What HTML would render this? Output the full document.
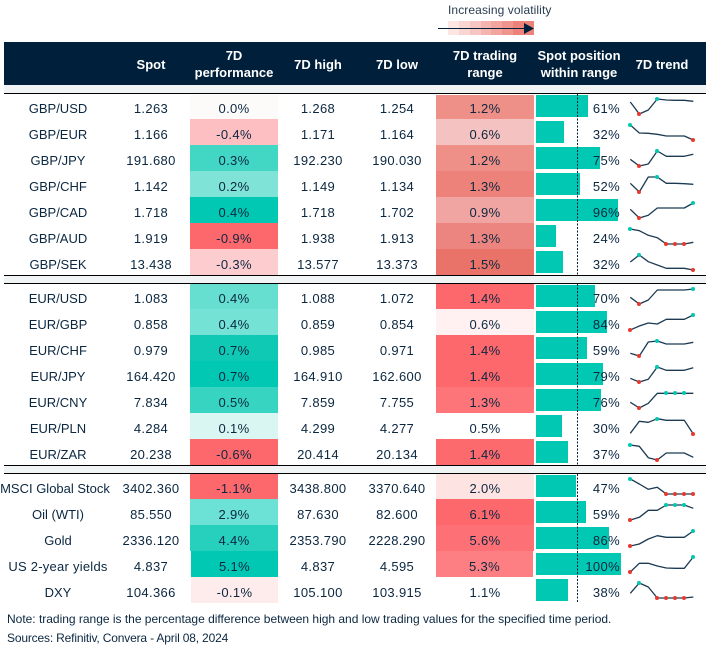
<!DOCTYPE html>
<html><head><meta charset="utf-8"><style>
html,body{margin:0;padding:0;background:#fff}
#w{position:relative;width:706px;height:648px;overflow:hidden;font:13px/32px "Liberation Sans",sans-serif;color:#0b2740}
.a{position:absolute}
.r{position:absolute;left:0;width:706px;height:26px}
.r span{position:absolute;top:0;height:26px;text-align:center;white-space:nowrap}
.r .s,.r .h,.r .o,.r .p,.r .g,.r .c{letter-spacing:.35px}
.l{left:0;width:116px}.s{left:110px;width:82px}.p{left:190px;width:88px}.h{left:278px;width:80px}.o{left:358px;width:78px}.g{left:436px;width:98px}
.r .b{left:536px;top:2px;height:22px;background:#00c8b3}
.r .c{left:580px;width:40px;text-align:right}
.hd{position:absolute;color:#fff;font-weight:bold;font-size:13px;line-height:17px;text-align:center;white-space:nowrap}
.ln{position:absolute;left:4px;width:702px;height:1px;background:#000}
.st{position:absolute;left:4px;width:702px;height:8px;background:#f0f4f4}
.n{position:absolute;left:7px;font-size:12px;line-height:16px;white-space:nowrap}
.sq{position:absolute;top:21px;height:14px;width:11px}
svg{position:absolute;left:0;top:0}
</style></head><body><div id="w">

<div class="a" style="left:448px;top:2px;font-size:12px;line-height:16px;white-space:nowrap;color:#2a3d50;letter-spacing:.1px">Increasing volatility</div>
<div class="sq" style="left:448px;background:#fde6e4"></div>
<div class="sq" style="left:459px;background:#fad6d3"></div>
<div class="sq" style="left:470px;background:#f7c6c2"></div>
<div class="sq" style="left:481px;background:#f4b5b0"></div>
<div class="sq" style="left:491px;background:#f2a59f"></div>
<div class="sq" style="left:502px;background:#ef958e"></div>
<div class="sq" style="left:513px;width:21px;background:#ec8279"></div>

<div class="a" style="left:4px;top:42px;width:702px;height:43px;background:#001f3a"></div>
<div class="hd" style="left:110px;width:82px;top:56px">Spot</div>
<div class="hd" style="left:190px;width:88px;top:47px">7D<br>performance</div>
<div class="hd" style="left:278px;width:80px;top:56px">7D high</div>
<div class="hd" style="left:358px;width:78px;top:56px">7D low</div>
<div class="hd" style="left:436px;width:98px;top:47px">7D trading<br>range</div>
<div class="hd" style="left:530px;width:98px;top:47px">Spot position<br>within range</div>
<div class="hd" style="left:625px;width:74px;top:56px">7D trend</div>
<div class="st" style="top:85px"></div>

<div class="r" style="top:93px"><span class="l">GBP/USD</span><span class="s">1.263</span><span class="p" style="background:#fdfbfa">0.0%</span><span class="h">1.268</span><span class="o">1.254</span><span class="g" style="background:#ee9087">1.2%</span><span class="b" style="width:52px"></span><span class="c">61%</span></div>
<div class="r" style="top:119px"><span class="l">GBP/EUR</span><span class="s">1.166</span><span class="p" style="background:#fdbfc1">-0.4%</span><span class="h">1.171</span><span class="o">1.164</span><span class="g" style="background:#f4c2c0">0.6%</span><span class="b" style="width:28px"></span><span class="c">32%</span></div>
<div class="r" style="top:145px"><span class="l">GBP/JPY</span><span class="s">191.680</span><span class="p" style="background:#42d6c5">0.3%</span><span class="h">192.230</span><span class="o">190.030</span><span class="g" style="background:#ee9087">1.2%</span><span class="b" style="width:64px"></span><span class="c">75%</span></div>
<div class="r" style="top:171px"><span class="l">GBP/CHF</span><span class="s">1.142</span><span class="p" style="background:#7fe3d8">0.2%</span><span class="h">1.149</span><span class="o">1.134</span><span class="g" style="background:#ec8279">1.3%</span><span class="b" style="width:44px"></span><span class="c">52%</span></div>
<div class="r" style="top:197px"><span class="l">GBP/CAD</span><span class="s">1.718</span><span class="p" style="background:#00c8b3">0.4%</span><span class="h">1.718</span><span class="o">1.702</span><span class="g" style="background:#f1a5a2">0.9%</span><span class="b" style="width:82px"></span><span class="c">96%</span></div>
<div class="r" style="top:223px"><span class="l">GBP/AUD</span><span class="s">1.919</span><span class="p" style="background:#fd686d">-0.9%</span><span class="h">1.938</span><span class="o">1.913</span><span class="g" style="background:#ec8580">1.3%</span><span class="b" style="width:20px"></span><span class="c">24%</span></div>
<div class="r" style="top:249px"><span class="l">GBP/SEK</span><span class="s">13.438</span><span class="p" style="background:#fdccce">-0.3%</span><span class="h">13.577</span><span class="o">13.373</span><span class="g" style="background:#e97369">1.5%</span><span class="b" style="width:27px"></span><span class="c">32%</span></div>

<div class="r" style="top:283px"><span class="l">EUR/USD</span><span class="s">1.083</span><span class="p" style="background:#66dfd0">0.4%</span><span class="h">1.088</span><span class="o">1.072</span><span class="g" style="background:#fd686d">1.4%</span><span class="b" style="width:59px"></span><span class="c">70%</span></div>
<div class="r" style="top:309px"><span class="l">EUR/GBP</span><span class="s">0.858</span><span class="p" style="background:#74e3d6">0.4%</span><span class="h">0.859</span><span class="o">0.854</span><span class="g" style="background:#fff1f1">0.6%</span><span class="b" style="width:71px"></span><span class="c">84%</span></div>
<div class="r" style="top:335px"><span class="l">EUR/CHF</span><span class="s">0.979</span><span class="p" style="background:#10c9b5">0.7%</span><span class="h">0.985</span><span class="o">0.971</span><span class="g" style="background:#fd686d">1.4%</span><span class="b" style="width:51px"></span><span class="c">59%</span></div>
<div class="r" style="top:361px"><span class="l">EUR/JPY</span><span class="s">164.420</span><span class="p" style="background:#00c8b3">0.7%</span><span class="h">164.910</span><span class="o">162.600</span><span class="g" style="background:#fd686d">1.4%</span><span class="b" style="width:67px"></span><span class="c">79%</span></div>
<div class="r" style="top:387px"><span class="l">EUR/CNY</span><span class="s">7.834</span><span class="p" style="background:#38d4c2">0.5%</span><span class="h">7.859</span><span class="o">7.755</span><span class="g" style="background:#fd7579">1.3%</span><span class="b" style="width:65px"></span><span class="c">76%</span></div>
<div class="r" style="top:413px"><span class="l">EUR/PLN</span><span class="s">4.284</span><span class="p" style="background:#daf6f2">0.1%</span><span class="h">4.299</span><span class="o">4.277</span><span class="g">0.5%</span><span class="b" style="width:26px"></span><span class="c">30%</span></div>
<div class="r" style="top:439px"><span class="l">EUR/ZAR</span><span class="s">20.238</span><span class="p" style="background:#fd686d">-0.6%</span><span class="h">20.414</span><span class="o">20.134</span><span class="g" style="background:#fd6a6e">1.4%</span><span class="b" style="width:32px"></span><span class="c">37%</span></div>

<div class="r" style="top:473px"><span class="l" style="left:-3px">MSCI Global Stock</span><span class="s">3402.360</span><span class="p" style="background:#fd686d">-1.1%</span><span class="h">3438.800</span><span class="o">3370.640</span><span class="g" style="background:#fee3e3">2.0%</span><span class="b" style="width:40px"></span><span class="c">47%</span></div>
<div class="r" style="top:499px"><span class="l">Oil (WTI)</span><span class="s">85.550</span><span class="p" style="background:#6ce1d5">2.9%</span><span class="h">87.630</span><span class="o">82.600</span><span class="g" style="background:#fd686d">6.1%</span><span class="b" style="width:50px"></span><span class="c">59%</span></div>
<div class="r" style="top:525px"><span class="l">Gold</span><span class="s">2336.120</span><span class="p" style="background:#26d0bd">4.4%</span><span class="h">2353.790</span><span class="o">2228.290</span><span class="g" style="background:#fd7176">5.6%</span><span class="b" style="width:73px"></span><span class="c">86%</span></div>
<div class="r" style="top:551px"><span class="l" style="letter-spacing:.25px">US 2-year yields</span><span class="s">4.837</span><span class="p" style="left:191px;width:87px;background:#00c8b3">5.1%</span><span class="h">4.837</span><span class="o">4.595</span><span class="g" style="width:97px;background:#fd7f83">5.3%</span><span class="b" style="width:85px"></span><span class="c">100%</span></div>
<div class="r" style="top:577px"><span class="l">DXY</span><span class="s">104.366</span><span class="p" style="left:191px;width:87px;background:#feecec">-0.1%</span><span class="h">105.100</span><span class="o">103.915</span><span class="g">1.1%</span><span class="b" style="width:32px"></span><span class="c">38%</span></div>

<div class="a" style="left:4px;top:94px;width:702px;height:1px;background:#fff"></div>
<div class="st" style="top:275px"></div>
<div class="st" style="top:465px"></div>
<div class="ln" style="top:93px"></div>
<div class="ln" style="top:275px"></div>
<div class="ln" style="top:283px"></div>
<div class="ln" style="top:465px"></div>
<div class="ln" style="top:473px"></div>

<svg width="706" height="648" viewBox="0 0 706 648">
<path d="M438 28.5H526" stroke="#001f3a" stroke-width="1" fill="none"/>
<path d="M524 23L534 28.5L524 34Z" fill="#001f3a"/>
<g stroke="#001f3a" stroke-width="1" stroke-dasharray="2 1.5">
<path d="M577.5 94V275M577.5 284V465M577.5 474V603"/>
</g>
<g fill="none" stroke="#1c3a52" stroke-width="1.3" stroke-linejoin="round">
<polyline points="630.3,102 639.3,114 648.3,110 657.3,99 666.3,100 675.3,100.3 684.3,100.3 693.3,101.3"/>
<polyline points="630.3,125 639.3,133 648.3,133.3 657.3,134.3 666.3,136 675.3,136 684.3,136 693.3,140"/>
<polyline points="630.3,159.3 639.3,166 648.3,164 657.3,151 666.3,156.3 675.3,156.3 684.3,156.3 693.3,154.3"/>
<polyline points="630.3,183.3 639.3,192 648.3,177 657.3,177 666.3,183.3 675.3,183.3 684.3,183.7 693.3,184.3"/>
<polyline points="630.3,209.3 639.3,218 648.3,215.3 657.3,208 666.3,208 675.3,208 684.3,208 693.3,203"/>
<polyline points="630.3,229 639.3,230.7 648.3,235.3 657.3,237.7 666.3,244 675.3,244 684.3,244 693.3,242.3"/>
<polyline points="630.3,262 639.3,255 648.3,261.7 657.3,265 666.3,268.3 675.3,268.3 684.3,268.3 693.3,270"/>
<polyline points="630.3,297.3 639.3,304 648.3,300 657.3,290 666.3,290 675.3,290 684.3,290 693.3,289"/>
<polyline points="630.3,330 639.3,326 648.3,323 657.3,324 666.3,319.3 675.3,319.3 684.3,319.3 693.3,315"/>
<polyline points="630.3,353.3 639.3,356 648.3,342 657.3,341 666.3,344 675.3,344 684.3,344 693.3,342.3"/>
<polyline points="630.3,378.3 639.3,382 648.3,379.3 657.3,367 666.3,370.3 675.3,370.3 684.3,370.3 693.3,367.7"/>
<polyline points="630.3,402.3 639.3,408 648.3,403.3 657.3,393.3 666.3,393.3 675.3,393.3 684.3,393.3 693.3,393.3"/>
<polyline points="630.3,433.3 639.3,421.3 648.3,422.3 657.3,418.7 666.3,420.3 675.3,420.3 684.3,420.3 693.3,434"/>
<polyline points="630.3,445 639.3,446.3 648.3,457.7 657.3,460 666.3,453 675.3,453 684.3,453 693.3,457.3"/>
<polyline points="630.3,479 639.3,484 648.3,489.3 657.3,487.3 666.3,494 675.3,494 684.3,494 693.3,494"/>
<polyline points="630.3,520 639.3,517.3 648.3,510.3 657.3,510.3 666.3,505 675.3,505 684.3,505 693.3,508.3"/>
<polyline points="630.3,546 639.3,544 648.3,539 657.3,535.7 666.3,537.3 675.3,537.3 684.3,537.3 693.3,531"/>
<polyline points="630.3,572 639.3,563.3 648.3,563.3 657.3,566 666.3,568 675.3,568.3 684.3,568.3 693.3,557"/>
<polyline points="630.3,593.3 639.3,583 648.3,587 657.3,598 666.3,598 675.3,598 684.3,598 693.3,597"/>
</g>
<g fill="#e8392f">
<circle cx="639" cy="114" r="2"/><circle cx="693" cy="140" r="2"/><circle cx="639" cy="166" r="2"/><circle cx="639" cy="192" r="2"/><circle cx="639" cy="218" r="2"/>
<circle cx="666" cy="244" r="2"/><circle cx="675" cy="244" r="2"/><circle cx="684" cy="244" r="2"/><circle cx="693" cy="270" r="2"/>
<circle cx="639" cy="304" r="2"/><circle cx="630" cy="330" r="2"/><circle cx="639" cy="356" r="2"/><circle cx="639" cy="382" r="2"/><circle cx="639" cy="408" r="2"/><circle cx="693" cy="434" r="2"/><circle cx="657" cy="460" r="2"/>
<circle cx="666" cy="494" r="2"/><circle cx="675" cy="494" r="2"/><circle cx="684" cy="494" r="2"/><circle cx="693" cy="494" r="2"/>
<circle cx="630" cy="520" r="2"/><circle cx="630" cy="546" r="2"/><circle cx="630" cy="572" r="2"/>
<circle cx="657" cy="598" r="2"/><circle cx="675" cy="598" r="2"/><circle cx="684" cy="598" r="2"/><circle cx="666" cy="598" r="2"/>
</g>
<g fill="#00c8b3">
<circle cx="657" cy="99" r="2"/><circle cx="630" cy="125" r="2"/><circle cx="657" cy="151" r="2"/><circle cx="657" cy="177" r="2"/><circle cx="693" cy="203" r="2"/><circle cx="630" cy="229" r="2"/><circle cx="639" cy="255" r="2"/>
<circle cx="693" cy="289" r="2"/><circle cx="693" cy="315" r="2"/><circle cx="657" cy="341" r="2"/><circle cx="657" cy="367" r="2"/><circle cx="666" cy="393" r="2"/><circle cx="675" cy="393" r="2"/><circle cx="684" cy="393" r="2"/><circle cx="657" cy="419" r="2"/><circle cx="630" cy="445" r="2"/>
<circle cx="630" cy="479" r="2"/><circle cx="666" cy="505" r="2"/><circle cx="675" cy="505" r="2"/><circle cx="684" cy="505" r="2"/><circle cx="693" cy="531" r="2"/><circle cx="693" cy="557" r="2"/><circle cx="639" cy="583" r="2"/>
</g>
</svg>

<div class="n" style="top:611px;letter-spacing:-.01px">Note: trading range is the percentage difference between high and low trading values for the specified time period.</div>
<div class="n" style="top:630px;letter-spacing:-.17px">Sources: Refinitiv, Convera - April 08, 2024</div>
</div></body></html>
